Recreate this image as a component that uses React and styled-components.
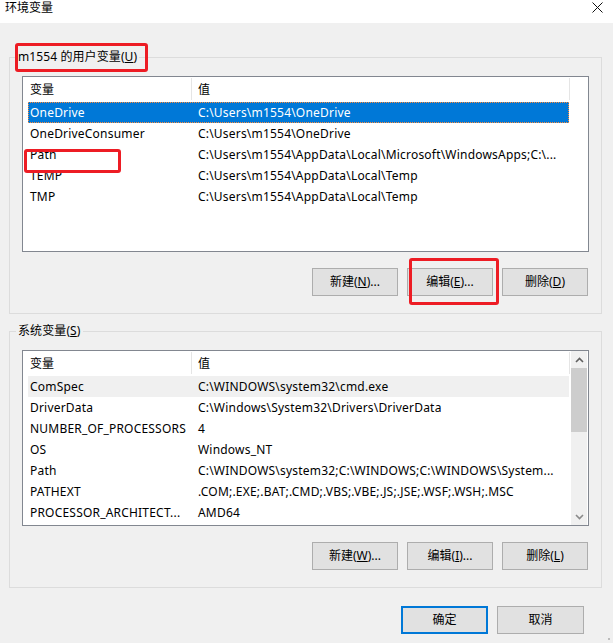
import React from 'react';
import styled, { createGlobalStyle } from 'styled-components';

const GlobalStyle = createGlobalStyle`
  html, body { margin: 0; padding: 0; background: #f0f0f0; }
  body {
    font-family: "Noto Sans", "Noto Sans CJK SC", sans-serif;
    font-size: 12px;
    color: #000;
  }
  * { box-sizing: border-box; }
`;

const Window = styled.div`
  position: relative;
  width: 613px;
  height: 643px;
  overflow: hidden;
  background: #f0f0f0;
  display: flex;
  flex-direction: column;
`;

const TitleBar = styled.div`
  height: 23px;
  flex: none;
  background: #fff;
  display: flex;
  justify-content: space-between;
  align-items: flex-start;
  padding: 0 10px 0 5px;
`;

const Title = styled.span`
  font-size: 12px;
  line-height: 15px;
`;

const CloseIcon = styled.svg`
  margin-top: 2px;
  display: block;
`;

const Body = styled.div`
  padding: 26px 11px 0 9px;
  display: flex;
  flex-direction: column;
`;

const Group = styled.fieldset`
  margin: ${(p) => (p.$first ? '0' : '9px')} 0 0 0;
  width: 593px;
  min-width: 0;
  border: 1px solid #dcdcdc;
  padding: 11px 12px 17px 12px;
`;

const Legend = styled.legend`
  padding: 0 2px;
  margin-left: -6px;
  height: 16px;
  line-height: 16px;
  font-size: 12px;
  letter-spacing: 0.1px;
`;

const List = styled.div`
  height: 176px;
  border: 1px solid #828790;
  background: #fff;
  display: flex;
`;

const ListMain = styled.div`
  flex: 1;
  min-width: 0;
  display: flex;
  flex-direction: column;
`;

const Header = styled.div`
  height: 25px;
  flex: none;
  display: flex;
`;

const HeaderCell = styled.div`
  width: ${(p) => p.$w}px;
  padding-left: ${(p) => p.$pad}px;
  display: flex;
  align-items: center;
  border-right: 1px solid #e5e5e5;
  margin: 1px 0 2px;
`;

const Rows = styled.div`
  padding-left: 5px;
  display: flex;
  flex-direction: column;
`;

const Row = styled.div`
  width: 541px;
  height: 21px;
  display: flex;
  align-items: center;
  border: 1px ${(p) => (p.$selected ? 'dotted #ff8c3a' : 'solid transparent')};
  background: ${(p) => (p.$selected ? '#0078d7' : p.$hover ? '#f0f0f0' : 'transparent')};
  color: ${(p) => (p.$selected ? '#fff' : '#000')};
  letter-spacing: 0.2px;
`;

const NameCell = styled.div`
  width: 162px;
  flex: none;
  padding-left: 1px;
  white-space: nowrap;
  overflow: hidden;
  text-overflow: ellipsis;
`;

const ValueCell = styled.div`
  flex: 1;
  min-width: 0;
  padding-left: 7px;
  white-space: nowrap;
  overflow: hidden;
  text-overflow: ellipsis;
`;

const ScrollBar = styled.div`
  width: 16px;
  margin-right: 1px;
  flex: none;
  background: #f0f0f0;
  display: flex;
  flex-direction: column;
`;

const ScrollArrow = styled.div`
  height: 17px;
  flex: none;
  display: flex;
  align-items: center;
  justify-content: center;
`;

const Thumb = styled.div`
  height: 64px;
  flex: none;
  background: #cdcdcd;
`;

const Track = styled.div`
  flex: 1;
`;

const ButtonRow = styled.div`
  display: flex;
  justify-content: flex-end;
  gap: ${(p) => p.$gap || 9}px;
  margin-top: ${(p) => p.$top || 16}px;
  padding-right: ${(p) => p.$right || 1}px;
`;

const Button = styled.button`
  width: ${(p) => p.$w || 86}px;
  height: 28px;
  padding: 0;
  margin: 0;
  background: #e1e1e1;
  border: ${(p) => (p.$default ? '2px solid #0078d7' : '1px solid #adadad')};
  font-family: inherit;
  font-size: 12px;
  color: #000;
  line-height: 16px;
`;

const Highlight = styled.div`
  position: absolute;
  left: ${(p) => p.$x}px;
  top: ${(p) => p.$y}px;
  width: ${(p) => p.$w}px;
  height: ${(p) => p.$h}px;
  border: 3px solid #ed1c24;
  border-radius: 3px;
  pointer-events: none;
`;

const Grip = styled.svg`
  position: absolute;
  right: 2px;
  bottom: 2px;
`;

const Chevron = ({ up, color }) => (
  <svg width="9" height="6" viewBox="0 0 9 6">
    <path
      d={up ? 'M1 5 L4.5 1.5 L8 5' : 'M1 1 L4.5 4.5 L8 1'}
      fill="none"
      stroke={color}
      strokeWidth="1.6"
    />
  </svg>
);

const userVars = [
  ['OneDrive', 'C:\\Users\\m1554\\OneDrive'],
  ['OneDriveConsumer', 'C:\\Users\\m1554\\OneDrive'],
  ['Path', 'C:\\Users\\m1554\\AppData\\Local\\Microsoft\\WindowsApps;C:\\...'],
  ['TEMP', 'C:\\Users\\m1554\\AppData\\Local\\Temp'],
  ['TMP', 'C:\\Users\\m1554\\AppData\\Local\\Temp'],
];

const sysVars = [
  ['ComSpec', 'C:\\WINDOWS\\system32\\cmd.exe'],
  ['DriverData', 'C:\\Windows\\System32\\Drivers\\DriverData'],
  ['NUMBER_OF_PROCESSORS', '4'],
  ['OS', 'Windows_NT'],
  ['Path', 'C:\\WINDOWS\\system32;C:\\WINDOWS;C:\\WINDOWS\\System...'],
  ['PATHEXT', '.COM;.EXE;.BAT;.CMD;.VBS;.VBE;.JS;.JSE;.WSF;.WSH;.MSC'],
  ['PROCESSOR_ARCHITECT...', 'AMD64'],
];

const VarTable = ({ rows, selected, hover }) => (
  <ListMain>
    <Header>
      <HeaderCell $w={169} $pad={7}>变量</HeaderCell>
      <HeaderCell $w={378} $pad={6}>值</HeaderCell>
    </Header>
    <Rows>
      {rows.map(([n, v], i) => (
        <Row key={n + i} $selected={i === selected} $hover={i === hover}>
          <NameCell>{n}</NameCell>
          <ValueCell>{v}</ValueCell>
        </Row>
      ))}
    </Rows>
  </ListMain>
);

export default function App() {
  return (
    <>
      <GlobalStyle />
      <Window>
        <TitleBar>
          <Title>环境变量</Title>
          <CloseIcon width="11" height="11" viewBox="0 0 11 11">
            <path d="M0.5 0.5 L10.5 10.5 M10.5 0.5 L0.5 10.5" stroke="#111" strokeWidth="1" fill="none" />
          </CloseIcon>
        </TitleBar>
        <Body>
          <Group $first>
            <Legend>
              m1554 的用户变量(<u>U</u>)
            </Legend>
            <List>
              <VarTable rows={userVars} selected={0} />
            </List>
            <ButtonRow>
              <Button>新建(<u>N</u>)...</Button>
              <Button>编辑(<u>E</u>)...</Button>
              <Button>删除(<u>D</u>)</Button>
            </ButtonRow>
          </Group>
          <Group>
            <Legend>
              系统变量(<u>S</u>)
            </Legend>
            <List>
              <VarTable rows={sysVars} hover={0} />
              <ScrollBar>
                <ScrollArrow>
                  <Chevron up color="#606060" />
                </ScrollArrow>
                <Thumb />
                <Track />
                <ScrollArrow>
                  <Chevron color="#8a8a8a" />
                </ScrollArrow>
              </ScrollBar>
            </List>
            <ButtonRow>
              <Button>新建(<u>W</u>)...</Button>
              <Button>编辑(<u>I</u>)...</Button>
              <Button>删除(<u>L</u>)</Button>
            </ButtonRow>
          </Group>
          <ButtonRow $top={18} $right={18}>
            <Button $default $w={87}>确定</Button>
            <Button $w={87}>取消</Button>
          </ButtonRow>
        </Body>
        <Highlight $x={15} $y={43} $w={133} $h={29} />
        <Highlight $x={24} $y={149} $w={97} $h={24} />
        <Highlight $x={409} $y={258} $w={90} $h={47} />
        <Grip width="8" height="8" viewBox="0 0 8 8">
          <rect x="5" y="5" width="2" height="2" fill="#bcbcbc" />
        </Grip>
      </Window>
    </>
  );
}
